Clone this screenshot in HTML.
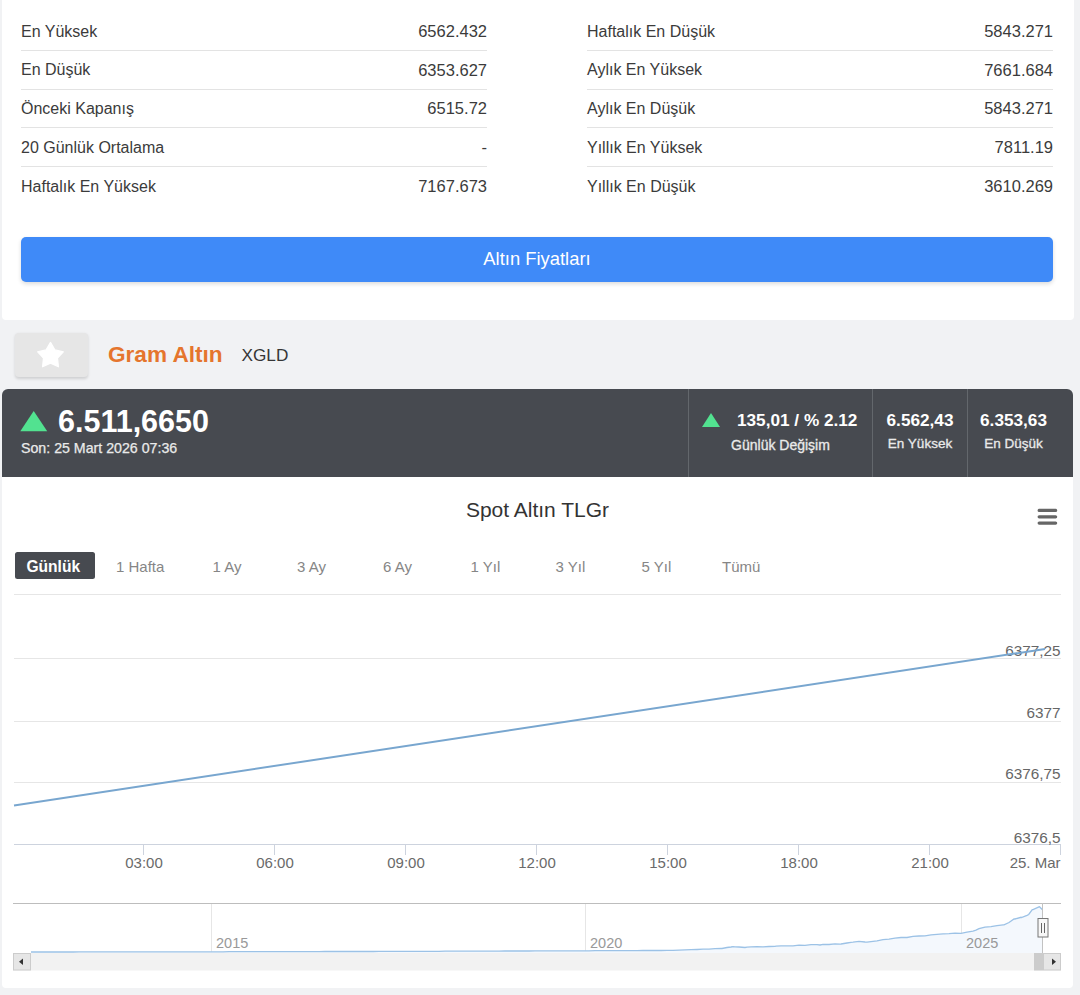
<!DOCTYPE html>
<html><head><meta charset="utf-8">
<style>
*{margin:0;padding:0;box-sizing:border-box}
html,body{width:1080px;height:995px;overflow:hidden;background:#f1f2f4;font-family:"Liberation Sans",sans-serif;color:#333}
.a{position:absolute;white-space:nowrap;line-height:1}
.card{position:absolute;background:#fff}
.sep{position:absolute;height:1px;background:#e3e3e3}
.lbl{font-size:16px;color:#3b3b3b}
.val{margin-top:-0.7px;font-size:16.5px;color:#3b3b3b;text-align:right}
.rs{font-size:15px;color:#868686}
.yl{font-size:15.3px;color:#666;text-align:right;right:19.5px}
.xl{font-size:15px;color:#6a6a6a;text-align:center;width:80px}
.grid{position:absolute;left:14px;width:1047px;height:1px;background:#e6e6e6}
</style></head>
<body>
<!-- top stats card -->
<div class="card" style="left:2px;top:-10px;width:1071.5px;height:330px;border-radius:0 0 4px 4px"></div>

<div class="a lbl" style="left:21px;top:23.5px">En Yüksek</div>
<div class="a val" style="right:593px;top:23.5px">6562.432</div>
<div class="sep" style="left:21px;width:466px;top:50px"></div>
<div class="a lbl" style="left:21px;top:62.3px">En Düşük</div>
<div class="a val" style="right:593px;top:62.3px">6353.627</div>
<div class="sep" style="left:21px;width:466px;top:89px"></div>
<div class="a lbl" style="left:21px;top:101.1px">Önceki Kapanış</div>
<div class="a val" style="right:593px;top:101.1px">6515.72</div>
<div class="sep" style="left:21px;width:466px;top:127px"></div>
<div class="a lbl" style="left:21px;top:140px">20 Günlük Ortalama</div>
<div class="a val" style="right:593px;top:140px">-</div>
<div class="sep" style="left:21px;width:466px;top:166px"></div>
<div class="a lbl" style="left:21px;top:178.9px">Haftalık En Yüksek</div>
<div class="a val" style="right:593px;top:178.9px">7167.673</div>

<div class="a lbl" style="left:587px;top:23.5px">Haftalık En Düşük</div>
<div class="a val" style="right:27px;top:23.5px">5843.271</div>
<div class="sep" style="left:587px;width:466px;top:50px"></div>
<div class="a lbl" style="left:587px;top:62.3px">Aylık En Yüksek</div>
<div class="a val" style="right:27px;top:62.3px">7661.684</div>
<div class="sep" style="left:587px;width:466px;top:89px"></div>
<div class="a lbl" style="left:587px;top:101.1px">Aylık En Düşük</div>
<div class="a val" style="right:27px;top:101.1px">5843.271</div>
<div class="sep" style="left:587px;width:466px;top:127px"></div>
<div class="a lbl" style="left:587px;top:140px">Yıllık En Yüksek</div>
<div class="a val" style="right:27px;top:140px">7811.19</div>
<div class="sep" style="left:587px;width:466px;top:166px"></div>
<div class="a lbl" style="left:587px;top:178.9px">Yıllık En Düşük</div>
<div class="a val" style="right:27px;top:178.9px">3610.269</div>

<div style="position:absolute;left:21px;top:237px;width:1032.3px;height:44.5px;background:#3f8af8;border-radius:5px;box-shadow:0 2px 4px rgba(0,0,0,.14)"></div>
<div class="a" style="left:21px;width:1032px;text-align:center;top:249.8px;font-size:18.4px;color:#fff">Altın Fiyatları</div>

<!-- title row -->
<div style="position:absolute;left:15px;top:333px;width:73px;height:44px;background:#e6e6e6;border-radius:4px;box-shadow:0 1.5px 3px rgba(0,0,0,.14)"></div>
<svg style="position:absolute;left:35.5px;top:341px" width="29" height="28"><path d="M14.50 1.40 L18.85 8.91 L27.34 10.73 L21.54 17.19 L22.44 25.82 L14.50 22.30 L6.56 25.82 L7.46 17.19 L1.66 10.73 L10.15 8.91 Z" fill="#fff" stroke="#fff" stroke-width="1.2" stroke-linejoin="round"/></svg>
<div class="a" style="left:108px;top:344px;font-size:22.6px;font-weight:bold;color:#e5752d">Gram Altın</div>
<div class="a" style="left:241.5px;top:347px;font-size:17.2px;color:#363636">XGLD</div>

<!-- dark header -->
<div style="position:absolute;left:1.5px;top:389px;width:1071.5px;height:88px;background:#474a50;border-radius:6px 6px 0 0"></div>
<svg style="position:absolute;left:20px;top:411px" width="28" height="21"><path d="M13.7 0 L27.2 20.3 L0.3 20.3 Z" fill="#52e290"/></svg>
<div class="a" style="left:58px;top:406px;font-size:30.5px;font-weight:bold;color:#fff">6.511,6650</div>
<div class="a" style="left:21px;top:441px;font-size:14.2px;color:#eaeaea;-webkit-text-stroke:0.25px #eaeaea">Son: 25 Mart 2026 07:36</div>

<div style="position:absolute;left:688px;top:389px;width:1px;height:88px;background:#63676c"></div>
<div style="position:absolute;left:872px;top:389px;width:1px;height:88px;background:#63676c"></div>
<div style="position:absolute;left:966.5px;top:389px;width:1px;height:88px;background:#63676c"></div>

<svg style="position:absolute;left:702px;top:413px" width="18" height="14"><path d="M9 0 L18 14 L0 14 Z" fill="#52e290"/></svg>
<div class="a" style="left:737px;top:412px;font-size:17.2px;font-weight:bold;color:#fff">135,01 / % 2.12</div>
<div class="a" style="left:689px;width:183px;text-align:center;top:437.5px;font-size:14px;color:#eaeaea;-webkit-text-stroke:0.3px #eaeaea">Günlük Değişim</div>
<div class="a" style="left:873px;width:94px;text-align:center;top:412px;font-size:17.2px;font-weight:bold;color:#fff">6.562,43</div>
<div class="a" style="left:873px;width:94px;text-align:center;top:437px;font-size:13.5px;color:#eaeaea;-webkit-text-stroke:0.3px #eaeaea">En Yüksek</div>
<div class="a" style="left:967px;width:93px;text-align:center;top:412px;font-size:17.2px;font-weight:bold;color:#fff">6.353,63</div>
<div class="a" style="left:967px;width:93px;text-align:center;top:437px;font-size:13.5px;color:#eaeaea;-webkit-text-stroke:0.3px #eaeaea">En Düşük</div>

<!-- chart card -->
<div class="card" style="left:2px;top:477px;width:1071px;height:510.5px;border-radius:0 0 4px 4px"></div>
<div class="a" style="left:0;width:1075px;text-align:center;top:498.5px;font-size:21px;color:#333">Spot Altın TLGr</div>
<svg style="position:absolute;left:1030px;top:500px" width="36" height="32"><path d="M9.2 10.4H25.6M9.2 16.8H25.6M9.2 23.1H25.6" stroke="#666" stroke-width="3.3" stroke-linecap="round"/></svg>

<div style="position:absolute;left:15px;top:552.3px;width:79.5px;height:27.2px;background:#474a50;border-radius:2.5px"></div>
<div class="a" style="left:13.5px;width:79.5px;text-align:center;top:559px;font-size:15.6px;font-weight:bold;color:#fff">Günlük</div>
<div class="a rs" style="left:116px;top:558.5px">1 Hafta</div>
<div class="a rs" style="left:212.5px;top:558.5px">1 Ay</div>
<div class="a rs" style="left:297px;top:558.5px">3 Ay</div>
<div class="a rs" style="left:383px;top:558.5px">6 Ay</div>
<div class="a rs" style="left:470.5px;top:558.5px">1 Yıl</div>
<div class="a rs" style="left:555.5px;top:558.5px">3 Yıl</div>
<div class="a rs" style="left:641.5px;top:558.5px">5 Yıl</div>
<div class="a rs" style="left:722px;top:558.5px">Tümü</div>

<!-- plot -->
<div class="grid" style="top:594px"></div>
<div class="grid" style="top:658px"></div>
<div class="grid" style="top:721px"></div>
<div class="grid" style="top:782px"></div>
<div class="grid" style="top:844px;background:#cdd3de"></div>
<div class="a yl" style="top:642.5px">6377,25</div>
<div class="a yl" style="top:704.5px">6377</div>
<div class="a yl" style="top:765.5px">6376,75</div>
<div class="a yl" style="top:830px">6376,5</div>

<svg style="position:absolute;left:0;top:0" width="1080" height="995">
<g stroke="#cdd3de" stroke-width="1">
<path d="M143.5 844.5V855M274.5 844.5V855M405.5 844.5V855M536.5 844.5V855M667.5 844.5V855M798.5 844.5V855M929.5 844.5V855M1060.5 844.5V855"/>
</g>
<path d="M14 805.5 L1045 649" stroke="#78a6cf" stroke-width="2" fill="none"/>
</svg>
<div class="a xl" style="left:104px;top:855px">03:00</div>
<div class="a xl" style="left:235px;top:855px">06:00</div>
<div class="a xl" style="left:366px;top:855px">09:00</div>
<div class="a xl" style="left:497px;top:855px">12:00</div>
<div class="a xl" style="left:628px;top:855px">15:00</div>
<div class="a xl" style="left:759px;top:855px">18:00</div>
<div class="a xl" style="left:890px;top:855px">21:00</div>
<div class="a" style="right:19.5px;top:855px;font-size:15px;color:#6a6a6a">25. Mar</div>

<!-- navigator -->
<svg style="position:absolute;left:0;top:0" width="1080" height="995">
<path d="M211.5 903V953M585.5 903V953M961.5 903V953" stroke="#e6e6e6" stroke-width="1"/>
<path d="M31.0 952.0 L37.0 952.0 L43.0 952.0 L49.0 952.0 L55.0 952.0 L61.0 952.0 L67.0 952.0 L73.0 952.0 L79.0 951.9 L85.0 951.9 L91.0 951.9 L97.0 951.9 L103.0 951.9 L109.0 951.9 L115.0 951.9 L121.0 951.9 L127.0 951.9 L133.0 951.9 L139.0 951.9 L145.0 951.9 L151.0 951.9 L157.0 951.9 L163.0 951.8 L169.0 951.8 L175.0 951.8 L181.0 951.8 L187.0 951.8 L193.0 951.8 L199.0 951.8 L200.0 951.8 L205.0 951.8 L211.0 951.8 L217.0 951.8 L223.0 951.8 L229.0 951.7 L235.0 951.7 L241.0 951.7 L247.0 951.7 L253.0 951.7 L259.0 951.7 L265.0 951.7 L271.0 951.7 L277.0 951.6 L283.0 951.6 L289.0 951.6 L295.0 951.6 L301.0 951.6 L307.0 951.6 L313.0 951.6 L319.0 951.6 L325.0 951.5 L331.0 951.5 L337.0 951.5 L343.0 951.5 L349.0 951.5 L355.0 951.5 L361.0 951.5 L367.0 951.5 L373.0 951.5 L379.0 951.4 L385.0 951.4 L391.0 951.4 L397.0 951.4 L400.0 951.4 L403.0 951.4 L409.0 951.4 L415.0 951.4 L421.0 951.3 L427.0 951.3 L433.0 951.3 L439.0 951.3 L445.0 951.2 L451.0 951.2 L457.0 951.2 L463.0 951.2 L469.0 951.2 L475.0 951.1 L481.0 951.1 L487.0 951.1 L493.0 951.1 L499.0 951.1 L505.0 951.0 L511.0 951.0 L517.0 951.0 L523.0 951.0 L529.0 951.0 L535.0 950.9 L541.0 950.9 L547.0 950.9 L553.0 950.9 L559.0 950.9 L565.0 950.8 L571.0 950.8 L577.0 950.8 L580.0 950.8 L583.0 950.8 L589.0 950.8 L595.0 950.7 L601.0 950.7 L607.0 950.7 L613.0 950.7 L619.0 950.6 L625.0 950.6 L631.0 950.6 L637.0 950.6 L643.0 950.5 L649.0 950.5 L655.0 950.5 L661.0 950.5 L667.0 950.4 L673.0 950.4 L679.0 950.2 L685.0 949.9 L691.0 949.7 L697.0 949.5 L703.0 949.2 L709.0 949.1 L715.0 948.7 L721.0 948.3 L722.0 948.5 L727.0 947.5 L731.0 947.0 L733.0 946.6 L735.0 946.8 L739.0 947.0 L745.0 947.5 L747.0 947.2 L751.0 946.9 L757.0 946.7 L763.0 946.8 L769.0 946.5 L775.0 946.3 L776.0 946.2 L781.0 945.8 L787.0 945.9 L793.0 945.9 L799.0 945.2 L805.0 945.3 L811.0 944.7 L817.0 944.7 L820.0 945.0 L823.0 944.3 L829.0 944.5 L835.0 943.9 L840.0 944.1 L841.0 944.0 L847.0 943.0 L851.0 942.3 L853.0 942.2 L859.0 941.4 L865.0 942.0 L867.0 942.1 L871.0 941.6 L877.0 940.9 L883.0 939.6 L889.0 939.1 L895.0 938.2 L901.0 937.5 L903.0 937.5 L907.0 937.5 L913.0 936.4 L919.0 936.0 L925.0 935.8 L931.0 934.8 L937.0 934.4 L943.0 933.9 L944.0 933.8 L949.0 933.7 L955.0 933.1 L961.0 933.3 L967.0 932.1 L973.0 931.2 L976.0 930.2 L979.0 928.7 L985.0 927.1 L991.0 926.7 L997.0 925.7 L1003.0 924.8 L1004.0 924.9 L1009.0 922.5 L1014.0 918.9 L1015.0 919.0 L1021.0 917.3 L1021.5 917.6 L1027.0 915.3 L1028.7 914.5 L1032.3 909.7 L1033.0 909.6 L1039.0 906.9 L1039.5 906.7 L1042.5 909.8 L1042.5 953 L31 953 Z" fill="#f4f8fd"/>
<path d="M31.0 952.0 L37.0 952.0 L43.0 952.0 L49.0 952.0 L55.0 952.0 L61.0 952.0 L67.0 952.0 L73.0 952.0 L79.0 951.9 L85.0 951.9 L91.0 951.9 L97.0 951.9 L103.0 951.9 L109.0 951.9 L115.0 951.9 L121.0 951.9 L127.0 951.9 L133.0 951.9 L139.0 951.9 L145.0 951.9 L151.0 951.9 L157.0 951.9 L163.0 951.8 L169.0 951.8 L175.0 951.8 L181.0 951.8 L187.0 951.8 L193.0 951.8 L199.0 951.8 L200.0 951.8 L205.0 951.8 L211.0 951.8 L217.0 951.8 L223.0 951.8 L229.0 951.7 L235.0 951.7 L241.0 951.7 L247.0 951.7 L253.0 951.7 L259.0 951.7 L265.0 951.7 L271.0 951.7 L277.0 951.6 L283.0 951.6 L289.0 951.6 L295.0 951.6 L301.0 951.6 L307.0 951.6 L313.0 951.6 L319.0 951.6 L325.0 951.5 L331.0 951.5 L337.0 951.5 L343.0 951.5 L349.0 951.5 L355.0 951.5 L361.0 951.5 L367.0 951.5 L373.0 951.5 L379.0 951.4 L385.0 951.4 L391.0 951.4 L397.0 951.4 L400.0 951.4 L403.0 951.4 L409.0 951.4 L415.0 951.4 L421.0 951.3 L427.0 951.3 L433.0 951.3 L439.0 951.3 L445.0 951.2 L451.0 951.2 L457.0 951.2 L463.0 951.2 L469.0 951.2 L475.0 951.1 L481.0 951.1 L487.0 951.1 L493.0 951.1 L499.0 951.1 L505.0 951.0 L511.0 951.0 L517.0 951.0 L523.0 951.0 L529.0 951.0 L535.0 950.9 L541.0 950.9 L547.0 950.9 L553.0 950.9 L559.0 950.9 L565.0 950.8 L571.0 950.8 L577.0 950.8 L580.0 950.8 L583.0 950.8 L589.0 950.8 L595.0 950.7 L601.0 950.7 L607.0 950.7 L613.0 950.7 L619.0 950.6 L625.0 950.6 L631.0 950.6 L637.0 950.6 L643.0 950.5 L649.0 950.5 L655.0 950.5 L661.0 950.5 L667.0 950.4 L673.0 950.4 L679.0 950.2 L685.0 949.9 L691.0 949.7 L697.0 949.5 L703.0 949.2 L709.0 949.1 L715.0 948.7 L721.0 948.3 L722.0 948.5 L727.0 947.5 L731.0 947.0 L733.0 946.6 L735.0 946.8 L739.0 947.0 L745.0 947.5 L747.0 947.2 L751.0 946.9 L757.0 946.7 L763.0 946.8 L769.0 946.5 L775.0 946.3 L776.0 946.2 L781.0 945.8 L787.0 945.9 L793.0 945.9 L799.0 945.2 L805.0 945.3 L811.0 944.7 L817.0 944.7 L820.0 945.0 L823.0 944.3 L829.0 944.5 L835.0 943.9 L840.0 944.1 L841.0 944.0 L847.0 943.0 L851.0 942.3 L853.0 942.2 L859.0 941.4 L865.0 942.0 L867.0 942.1 L871.0 941.6 L877.0 940.9 L883.0 939.6 L889.0 939.1 L895.0 938.2 L901.0 937.5 L903.0 937.5 L907.0 937.5 L913.0 936.4 L919.0 936.0 L925.0 935.8 L931.0 934.8 L937.0 934.4 L943.0 933.9 L944.0 933.8 L949.0 933.7 L955.0 933.1 L961.0 933.3 L967.0 932.1 L973.0 931.2 L976.0 930.2 L979.0 928.7 L985.0 927.1 L991.0 926.7 L997.0 925.7 L1003.0 924.8 L1004.0 924.9 L1009.0 922.5 L1014.0 918.9 L1015.0 919.0 L1021.0 917.3 L1021.5 917.6 L1027.0 915.3 L1028.7 914.5 L1032.3 909.7 L1033.0 909.6 L1039.0 906.9 L1039.5 906.7 L1042.5 909.8" fill="none" stroke="#9cc2e6" stroke-width="1.3"/>
<path d="M13 903.5H1061" stroke="#bdbdbd" stroke-width="1"/>
<path d="M1042.5 903V953" stroke="#c2c2c2" stroke-width="1"/>
<rect x="13" y="953" width="1048" height="17.5" fill="#f2f2f2"/>
<rect x="1034" y="953" width="9" height="17.5" fill="#cccccc"/>
<rect x="13.5" y="953.5" width="17" height="16.5" fill="#e6e6e6" stroke="#cccccc"/>
<rect x="1043.5" y="953.5" width="17" height="16.5" fill="#e6e6e6" stroke="#cccccc"/>
<path d="M19 961.7 L23 958.5 L23 965 Z" fill="#333"/>
<path d="M1056 961.7 L1052 958.5 L1052 965 Z" fill="#333"/>
<rect x="1038" y="918.5" width="10" height="18.5" fill="#f7f7f7" stroke="#777"/>
<path d="M1041.5 923V933M1044.5 923V933" stroke="#666"/>
</svg>
<div class="a" style="left:216px;top:936px;font-size:14.5px;color:#999">2015</div>
<div class="a" style="left:590px;top:936px;font-size:14.5px;color:#999">2020</div>
<div class="a" style="left:966px;top:936px;font-size:14.5px;color:#999">2025</div>
</body></html>
